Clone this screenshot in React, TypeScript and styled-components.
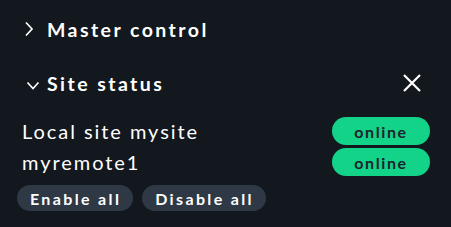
import React from 'react';
import styled, { createGlobalStyle } from 'styled-components';

const GlobalStyle = createGlobalStyle`
  html, body {
    margin: 0;
    padding: 0;
    background: #12181e;
  }
  body {
    font-family: Lato, "Open Sans", sans-serif;
    color: #ffffff;
  }
`;

interface Site {
  name: string;
  status: string;
}

const sites: Site[] = [
  { name: 'Local site mysite', status: 'online' },
  { name: 'myremote1', status: 'online' },
];

const ChevronRight = () => (
  <svg width="10" height="16" viewBox="0 0 10 16" fill="none">
    <polyline points="2,1.5 8,8 2,14.5" stroke="#fff" strokeWidth="1.7" />
  </svg>
);

const ChevronDown = () => (
  <svg width="14" height="9" viewBox="0 0 14 9" fill="none">
    <polyline points="1.5,1.5 7,7.5 12.5,1.5" stroke="#fff" strokeWidth="1.7" />
  </svg>
);

const CloseIcon = () => (
  <svg width="20" height="20" viewBox="0 0 20 20" fill="none">
    <path d="M2 2 L18 18 M18 2 L2 18" stroke="#fff" strokeWidth="2.2" />
  </svg>
);

const App = () => {
  return (
    <>
      <GlobalStyle />
      <Sidebar>
        <Snapin>
          <SnapinHead>
            <Toggle>
              <ChevronRight />
            </Toggle>
            <Title>Master control</Title>
          </SnapinHead>
        </Snapin>
        <Snapin $open>
          <SnapinHead>
            <Toggle $down>
              <ChevronDown />
            </Toggle>
            <Title>Site status</Title>
            <CloseButton>
              <CloseIcon />
            </CloseButton>
          </SnapinHead>
          <SnapinBody>
            <SiteList>
              {sites.map(site => (
                <SiteRow key={site.name}>
                  <SiteName>{site.name}</SiteName>
                  <StatusPill>{site.status}</StatusPill>
                </SiteRow>
              ))}
            </SiteList>
            <Actions>
              <ActionButton>Enable all</ActionButton>
              <ActionButton>Disable all</ActionButton>
            </Actions>
          </SnapinBody>
        </Snapin>
      </Sidebar>
    </>
  );
};

const Sidebar = styled.div`
  width: 451px;
  padding-top: 12px;
  display: flex;
  flex-direction: column;
  gap: 20px;
`;

const Snapin = styled.div<{ $open?: boolean }>`
  display: flex;
  flex-direction: column;
`;

const SnapinHead = styled.div`
  display: flex;
  align-items: center;
  height: 34px;
  padding: 0 29px 0 24px;
`;

const Toggle = styled.span<{ $down?: boolean }>`
  display: flex;
  align-items: center;
  width: 23px;
  margin-top: ${props => (props.$down ? '5px' : '0')};
  margin-left: ${props => (props.$down ? '2px' : '0')};
  margin-right: ${props => (props.$down ? '-2px' : '0')};
`;

const Title = styled.h2`
  flex: 1;
  margin: 0;
  font-size: 19.5px;
  font-weight: 700;
  letter-spacing: 2.45px;
  color: #ffffff;
`;

const CloseButton = styled.button`
  background: none;
  border: none;
  padding: 0;
  display: flex;
  cursor: pointer;
`;

const SnapinBody = styled.div`
  padding: 17px 21px 0 17px;
  display: flex;
  flex-direction: column;
  gap: 9px;
`;

const SiteList = styled.div`
  display: flex;
  flex-direction: column;
  gap: 3px;
`;

const SiteRow = styled.div`
  display: flex;
  align-items: center;
  justify-content: space-between;
  height: 28px;
  padding-left: 5px;
`;

const SiteName = styled.span`
  font-size: 20px;
  font-weight: 400;
  letter-spacing: 1.95px;
  color: #ffffff;
`;

const StatusPill = styled.span`
  display: flex;
  align-items: center;
  justify-content: center;
  width: 98px;
  height: 28px;
  border-radius: 14px;
  background: #13d389;
  color: #1b232b;
  font-size: 16px;
  font-weight: 700;
  letter-spacing: 1.6px;
`;

const Actions = styled.div`
  display: flex;
  gap: 9px;
`;

const ActionButton = styled.button`
  height: 26px;
  padding: 0 12px 0 13px;
  border: none;
  border-radius: 13px;
  background: #2e3945;
  color: #ffffff;
  font-family: Lato, "Open Sans", sans-serif;
  font-size: 16px;
  font-weight: 700;
  letter-spacing: 2.35px;
  cursor: pointer;
`;

export default App;
